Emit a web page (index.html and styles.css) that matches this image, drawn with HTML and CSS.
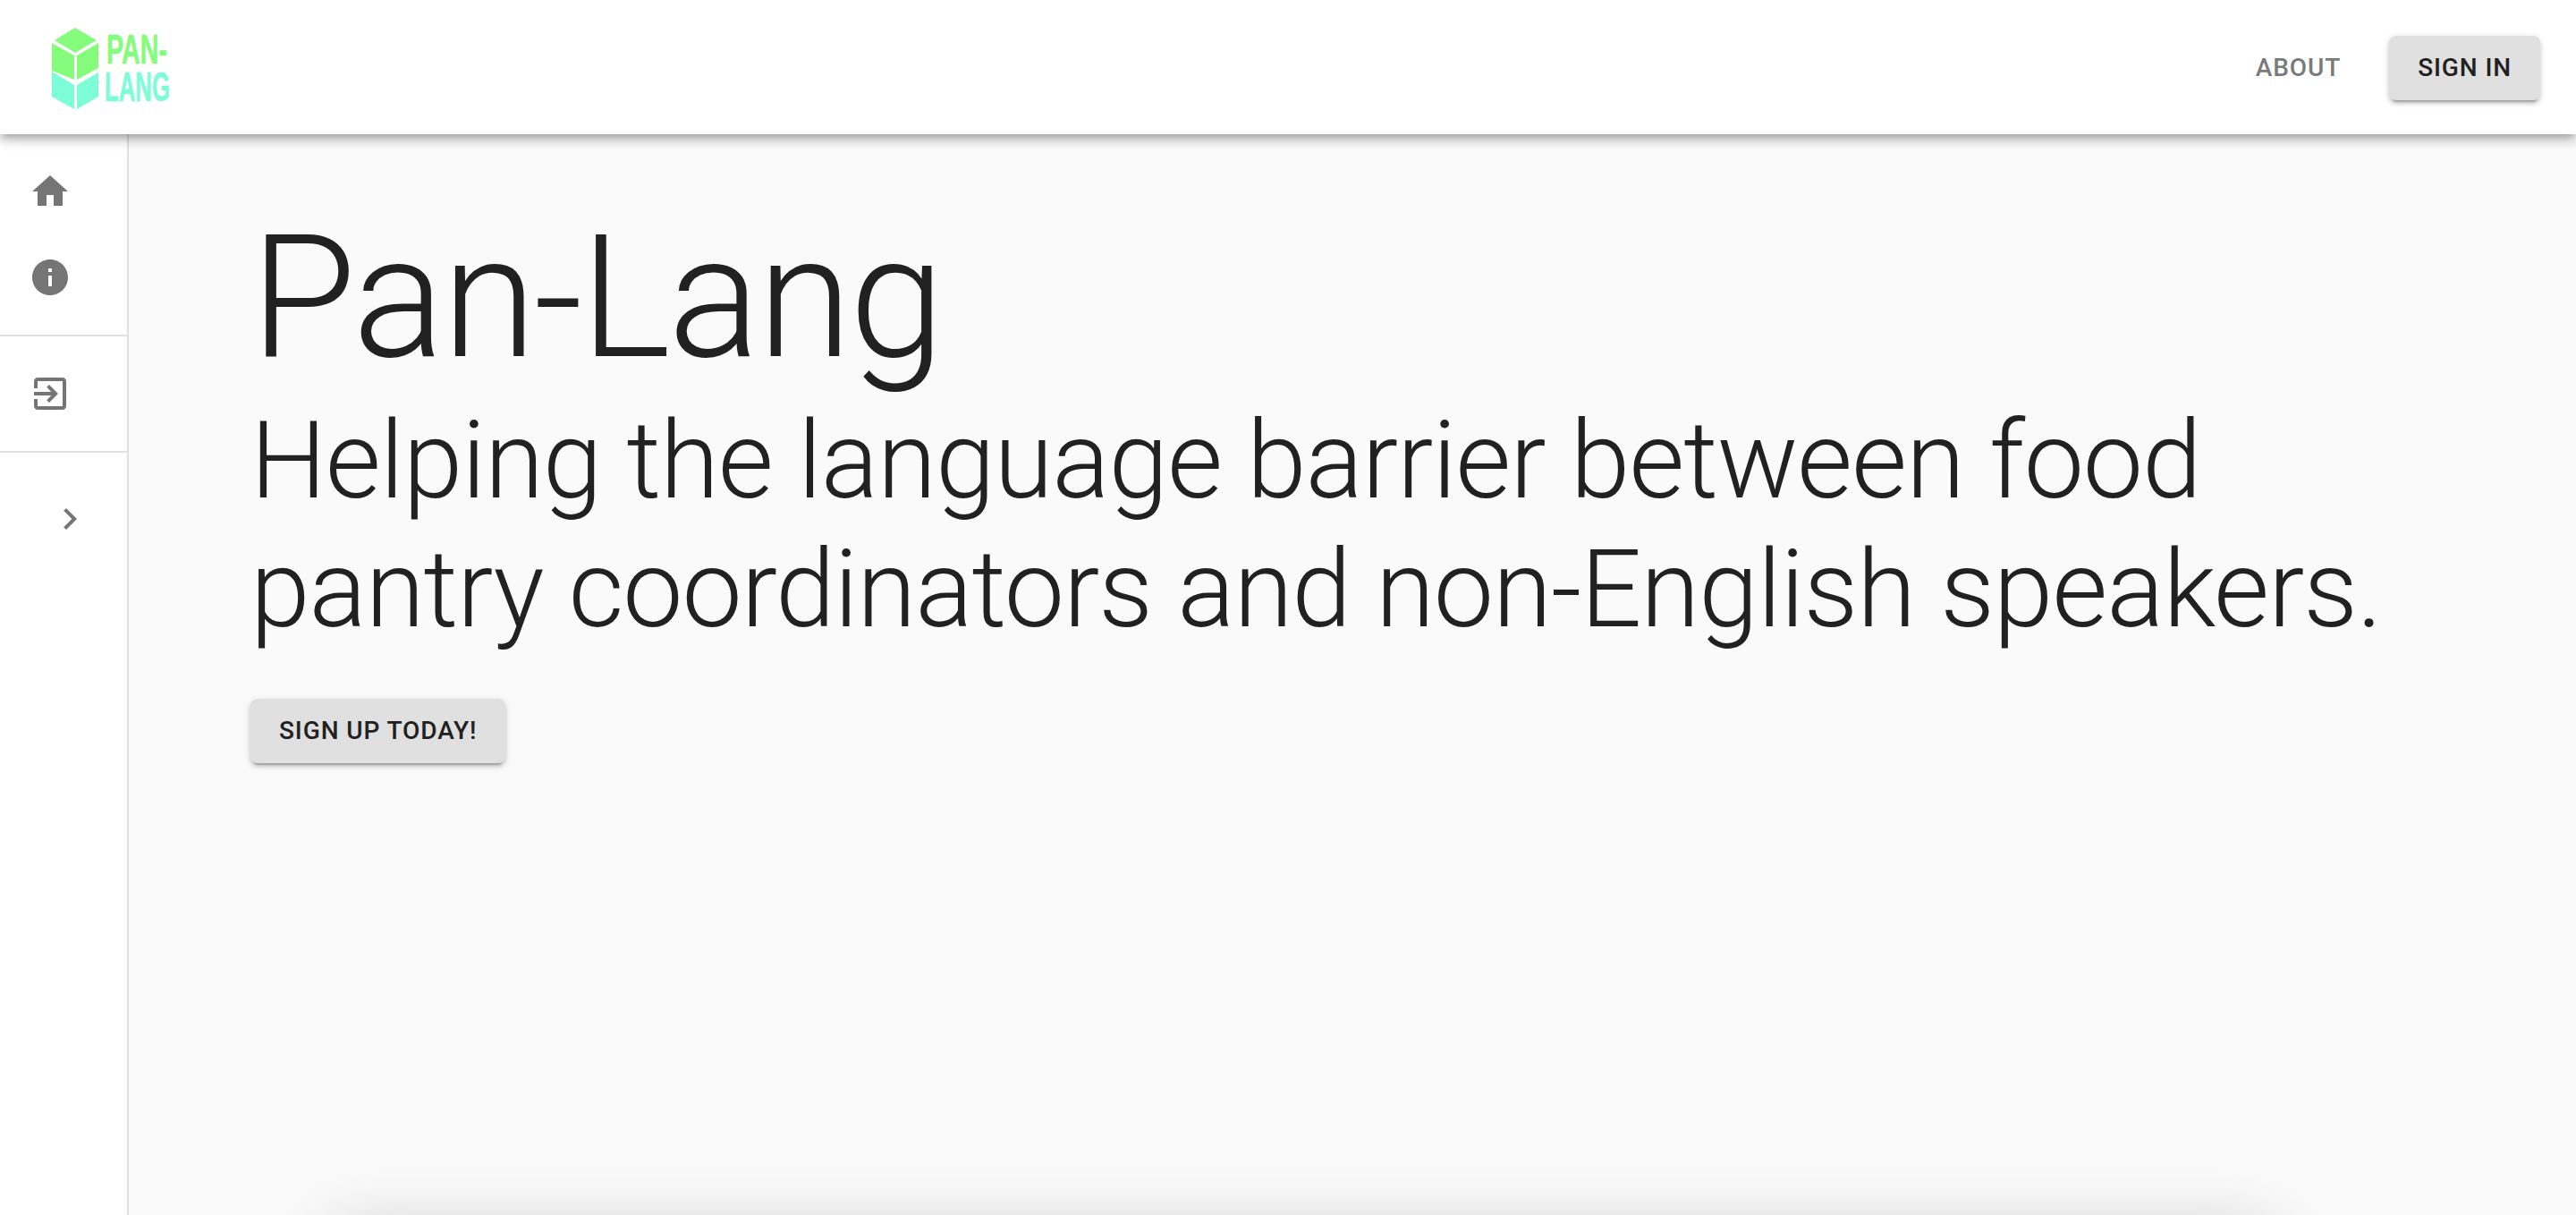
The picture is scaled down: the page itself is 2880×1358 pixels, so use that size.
FILE: index.html
```html
<!DOCTYPE html>
<html lang="en">
<head>
    <meta charset="UTF-8">
    <meta name="viewport" content="width=device-width, initial-scale=1.0">
    <title>Pan-Lang</title>
    <link rel="stylesheet" href="styles.css">
</head>
<body>
    <header class="app-bar">
        <a class="logo" href="#">
            <svg width="145" height="100" viewBox="50 26 145 100" aria-label="Pan-Lang">
                <polygon class="green" points="84,31 108,45 84,59 61,45"/>
                <polygon class="green" points="58,48 83,62 83,89 58,79"/>
                <polygon class="green" points="110,48 86,62 86,89 110,76"/>
                <polygon class="teal" points="58,80 83,95 83,122 58,108"/>
                <polygon class="teal" points="110,81 86,95 86,122 110,108"/>
                <text class="logo-text green" x="119" y="71" textLength="68" lengthAdjust="spacingAndGlyphs">PAN-</text>
                <text class="logo-text teal" x="117" y="113" textLength="73" lengthAdjust="spacingAndGlyphs">LANG</text>
            </svg>
        </a>
        <nav class="top-nav">
            <a class="btn btn-text" href="#">About</a>
            <a class="btn btn-raised" href="#">Sign In</a>
        </nav>
    </header>

    <div class="layout">
        <aside class="sidebar">
            <ul class="side-list">
                <li><svg class="icon" viewBox="0 0 24 24"><path d="M10 20v-6h4v6h5v-8h3L12 3 2 12h3v8z"/></svg></li>
                <li><svg class="icon" viewBox="0 0 24 24"><path d="M12 2C6.48 2 2 6.48 2 12s4.48 10 10 10 10-4.48 10-10S17.52 2 12 2zm1 15h-2v-6h2v6zm0-8h-2V7h2v2z"/></svg></li>
            </ul>
            <ul class="side-list">
                <li><svg class="icon" viewBox="0 0 24 24"><path d="M10.09 15.59L11.5 17l5-5-5-5-1.41 1.41L12.67 11H3v2h9.67l-2.58 2.59zM19 3H5c-1.11 0-2 .9-2 2v4h2V5h14v14H5v-4H3v4c0 1.1.89 2 2 2h14c1.1 0 2-.9 2-2V5c0-1.1-.9-2-2-2z"/></svg></li>
            </ul>
            <div class="side-toggle">
                <svg class="icon" viewBox="0 0 24 24"><path d="M10 6L8.59 7.41 13.17 12l-4.58 4.59L10 18l6-6z"/></svg>
            </div>
        </aside>

        <main class="content">
            <h1>Pan-Lang</h1>
            <h2>Helping the language barrier between food pantry coordinators and non-English speakers.</h2>
            <a class="btn btn-raised" href="#">Sign up today!</a>
            <section class="card"></section>
        </main>
    </div>
</body>
</html>
```

FILE: styles.css
```css
* {
    box-sizing: border-box;
}

body {
    font-family: Roboto, "Liberation Sans", sans-serif;
    background-color: #fafafa;
    color: #212121;
    margin: 0;
    height: 100vh;
    overflow: hidden;
    display: flex;
    flex-direction: column;
}

.app-bar {
    height: 150px;
    flex-shrink: 0;
    background-color: white;
    display: flex;
    align-items: center;
    justify-content: space-between;
    padding: 2px 40px 0 50px;
    position: relative;
    z-index: 2;
    box-shadow: 0 4px 8px -2px rgba(0, 0, 0, 0.2), 0 8px 10px 0 rgba(0, 0, 0, 0.14), 0 2px 20px 0 rgba(0, 0, 0, 0.12);
}

.logo {
    display: block;
    height: 100px;
}

.logo svg {
    display: block;
    overflow: visible;
}

.green {
    fill: #85fc7b;
}

.teal {
    fill: #7cfdd8;
}

.logo-text {
    font-family: "Liberation Sans Narrow", "Liberation Sans", sans-serif;
    font-weight: bold;
    font-size: 46px;
    stroke-width: 0.6px;
}

.logo-text.green {
    stroke: #85fc7b;
}

.logo-text.teal {
    stroke: #7cfdd8;
}

.top-nav {
    display: flex;
    align-items: center;
    gap: 22px;
}

.btn {
    display: inline-block;
    font-size: 28px;
    font-weight: 480;
    line-height: 40px;
    letter-spacing: 0.9px;
    text-transform: uppercase;
    text-decoration: none;
    padding: 16px 32px;
    border-radius: 8px;
}

.btn-text {
    color: #7a7a7a;
}

.btn-raised {
    color: #212121;
    background-color: #e0e0e0;
    box-shadow: 0 6px 2px -4px rgba(0, 0, 0, 0.2), 0 4px 4px 0 rgba(0, 0, 0, 0.14), 0 2px 10px 0 rgba(0, 0, 0, 0.12);
}

.layout {
    flex: 1;
    display: flex;
    min-height: 0;
}

.sidebar {
    width: 144px;
    flex-shrink: 0;
    background-color: white;
    border-right: 2px solid #e0e0e0;
}

.side-list {
    list-style: none;
    margin: 0;
    padding: 16px 0;
    border-bottom: 2px solid #e0e0e0;
}

.side-list li {
    height: 96px;
    padding-left: 32px;
    display: flex;
    align-items: center;
}

.icon {
    width: 48px;
    height: 48px;
    fill: #757575;
}

.side-toggle {
    display: flex;
    justify-content: flex-end;
    padding: 50px 40px 0 0;
}

.content {
    flex: 1;
    padding: 0 0 0 136px;
    min-width: 0;
}

h1 {
    font-size: 192px;
    font-weight: 300;
    line-height: 224px;
    letter-spacing: -3px;
    margin: 0;
    padding-top: 71px;
    box-sizing: content-box;
}

h2 {
    font-size: 120px;
    font-weight: 300;
    line-height: 144px;
    letter-spacing: -1.1px;
    margin: -2px 0 50px;
    max-width: 2500px;
}

.card {
    width: 2170px;
    height: 400px;
    margin: 537px 0 0 90px;
    background-color: white;
    box-shadow: 0 0 80px rgba(0, 0, 0, 0.3);
}
```
